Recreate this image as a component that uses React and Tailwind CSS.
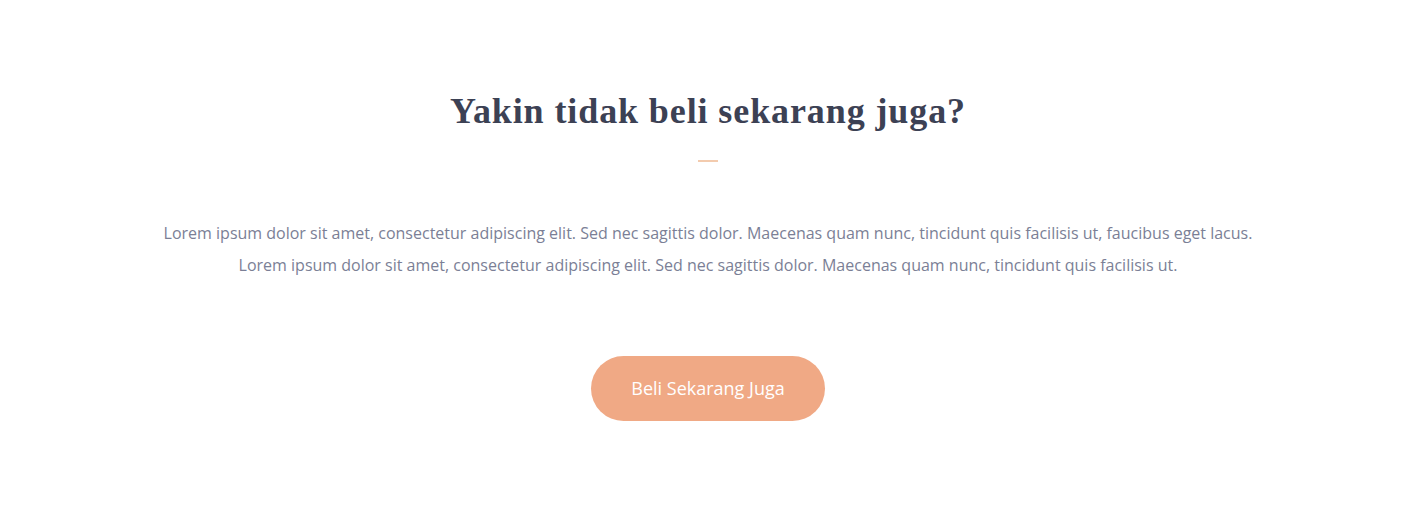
import React from "react";

export default function App() {
  return (
    <div className="w-full min-h-[511px] bg-white flex flex-col items-center pt-[87px] font-['Open_Sans',sans-serif]">
      <h2 className="text-[36px] leading-[48px] font-bold text-[#3c4154] font-['Liberation_Serif',serif] tracking-[0.9px]">
        Yakin tidak beli sekarang juga?
      </h2>
      <div className="w-5 h-[2px] bg-[#f3cbae] mt-[25px]" />
      <div className="mt-[55px] text-center text-[16px] leading-[32px] text-[#7b7f96]">
        <p>Lorem ipsum dolor sit amet, consectetur adipiscing elit. Sed nec sagittis dolor. Maecenas quam nunc, tincidunt quis facilisis ut, faucibus eget lacus.</p>
        <p>Lorem ipsum dolor sit amet, consectetur adipiscing elit. Sed nec sagittis dolor. Maecenas quam nunc, tincidunt quis facilisis ut.</p>
      </div>
      <button className="mt-[75px] w-[234px] h-[65px] rounded-full bg-[#f0a985] text-white text-[18px]">
        Beli Sekarang Juga
      </button>
    </div>
  );
}
